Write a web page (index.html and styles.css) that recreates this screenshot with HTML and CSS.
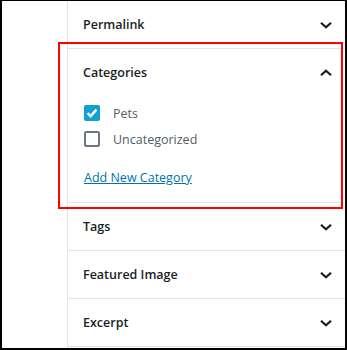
FILE: index.html
```html
<!DOCTYPE html>
<html>
<head>
	<meta charset="UTF-8">
	<title>Document settings</title>
	<link rel="stylesheet" href="styles.css">
</head>
<body>
	<div class="frame">
		<div class="gap"></div>
		<div class="sidebar">
			<div class="panel">
				<div class="panel-head">
					<span>Permalink</span>
					<svg class="arrow" width="14" height="8" viewBox="0 0 14 8"><polyline points="2,1.8 7,6.3 12,1.8"/></svg>
				</div>
			</div>
			<div class="panel">
				<div class="panel-head">
					<span>Categories</span>
					<svg class="arrow" width="14" height="8" viewBox="0 0 14 8"><polyline points="2,6.2 7,1.7 12,6.2"/></svg>
				</div>
				<div class="panel-body">
					<div class="cat-list">
						<label class="cat">
							<span class="box checked">
								<svg width="16" height="16" viewBox="0 0 16 16"><polyline points="3.6,8.2 6.6,11.2 12.4,4.6"/></svg>
							</span>
							Pets
						</label>
						<label class="cat">
							<span class="box"></span>
							Uncategorized
						</label>
					</div>
					<a class="add" href="#">Add New Category</a>
				</div>
			</div>
			<div class="panel">
				<div class="panel-head">
					<span>Tags</span>
					<svg class="arrow" width="14" height="8" viewBox="0 0 14 8"><polyline points="2,1.8 7,6.3 12,1.8"/></svg>
				</div>
			</div>
			<div class="panel">
				<div class="panel-head">
					<span>Featured Image</span>
					<svg class="arrow" width="14" height="8" viewBox="0 0 14 8"><polyline points="2,1.8 7,6.3 12,1.8"/></svg>
				</div>
			</div>
			<div class="panel">
				<div class="panel-head">
					<span>Excerpt</span>
					<svg class="arrow" width="14" height="8" viewBox="0 0 14 8"><polyline points="2,1.8 7,6.3 12,1.8"/></svg>
				</div>
			</div>
		</div>
		<div class="mark"></div>
	</div>
</body>
</html>
```

FILE: styles.css
```css
body{
	margin: 0;
	font-family: 'Open Sans', 'Noto Sans', sans-serif;
	font-size: 12.5px;
	color: #191e23;
	background: #fff;
}
.frame{
	position: relative;
	box-sizing: border-box;
	width: 347px;
	height: 350px;
	border: 2px solid #000;
	border-top-width: 1px;
	display: flex;
	overflow: hidden;
}
.gap{
	width: 65px;
	flex: none;
}
.sidebar{
	flex: 1;
	border-left: 1px solid #e2e4e7;
}
.panel{
	border-bottom: 1px solid #e2e4e7;
}
.panel-head{
	height: 47px;
	display: flex;
	align-items: center;
	justify-content: space-between;
	padding: 0 12px 0 15px;
	font-weight: 600;
}
.arrow polyline{
	fill: none;
	stroke: #191e23;
	stroke-width: 2.2;
}
.panel-body{
	padding: 9px 16px 15px 16px;
}
.cat-list{
	display: flex;
	flex-direction: column;
	gap: 10px;
	margin-bottom: 22px;
}
.cat{
	display: flex;
	align-items: center;
	height: 16px;
	color: #555d66;
	cursor: pointer;
}
.box{
	box-sizing: border-box;
	width: 16px;
	height: 16px;
	margin-right: 13px;
	border: 2px solid #6c7781;
	border-radius: 2px;
}
.box.checked{
	border: none;
	background-color: #11a0d2;
}
.box svg{
	display: block;
}
.box polyline{
	fill: none;
	stroke: #fff;
	stroke-width: 2.4;
}
.add{
	display: block;
	line-height: 18px;
	color: #0073aa;
	text-decoration: underline;
}
.mark{
	position: absolute;
	left: 56px;
	top: 41px;
	width: 285px;
	height: 167px;
	box-sizing: border-box;
	border: 2px solid #f00;
}
```
